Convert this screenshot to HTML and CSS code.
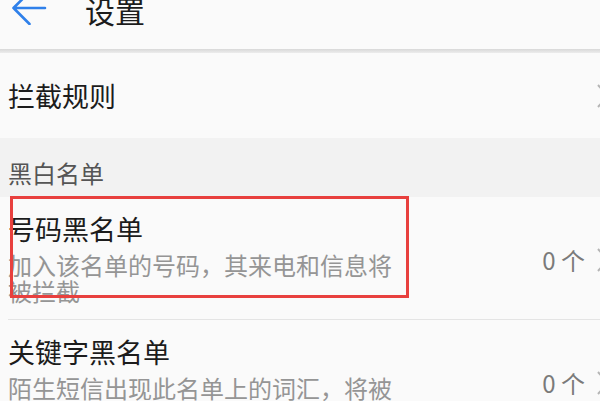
FILE: index.html
```html
<!DOCTYPE html>
<html lang="zh-CN">
<head>
<meta charset="utf-8">
<title>设置</title>
<link rel="stylesheet" href="styles.css">
</head>
<body>
<div class="screen">
  <header class="topbar">
    <svg class="back" viewBox="0 0 36 34" width="36" height="34">
      <path d="M34 17H2.5M18.5 1L2.5 17L18.5 33" fill="none" stroke="#2f80ea" stroke-width="2.6" stroke-linecap="round" stroke-linejoin="round"/>
    </svg>
    <h1 class="title">设置</h1>
  </header>
  <div class="topbar-shadow"></div>

  <div class="row row-single">
    <span class="row-title">拦截规则</span>
    <svg class="chevron" viewBox="0 0 12 24" width="12" height="24">
      <path d="M1 1L11 12L1 23" fill="none" stroke="#b5b5b5" stroke-width="2"/>
    </svg>
  </div>

  <div class="section">黑白名单</div>

  <div class="row row-item">
    <div class="row-text">
      <div class="row-title">号码黑名单</div>
      <div class="row-sub">加入该名单的号码，其来电和信息将被拦截</div>
    </div>
    <span class="count">0 个</span>
    <svg class="chevron" viewBox="0 0 12 24" width="12" height="24">
      <path d="M1 1L11 12L1 23" fill="none" stroke="#b5b5b5" stroke-width="2"/>
    </svg>
  </div>
  <div class="divider"></div>
  <div class="row row-item">
    <div class="row-text">
      <div class="row-title">关键字黑名单</div>
      <div class="row-sub">陌生短信出现此名单上的词汇，将被拦截</div>
    </div>
    <span class="count">0 个</span>
    <svg class="chevron" viewBox="0 0 12 24" width="12" height="24">
      <path d="M1 1L11 12L1 23" fill="none" stroke="#b5b5b5" stroke-width="2"/>
    </svg>
  </div>

  <div class="annotation"></div>
</div>
</body>
</html>
```

FILE: styles.css
```css
html, body {
  margin: 0;
  padding: 0;
  background: #fafafa;
}

.screen {
  position: relative;
  width: 600px;
  height: 401px;
  overflow: hidden;
  background: #fafafa;
  font-family: "Noto Sans CJK SC", "Noto Sans", sans-serif;
  color: #1c1c1c;
}

.topbar {
  display: flex;
  align-items: flex-start;
  height: 49px;
  background: #fafafa;
}

.back {
  display: block;
  flex: none;
  margin: -9px 0 0 11px;
}

.title {
  margin: -5px 0 0 38px;
  font-size: 30px;
  line-height: 30px;
  font-weight: 400;
  color: #1c1c1c;
}

.topbar-shadow {
  height: 4px;
  background: linear-gradient(#d8d8d8, #ececec);
}

.row {
  display: flex;
  align-items: center;
  padding-left: 8px;
  background: #fafafa;
}

.row-single {
  height: 85px;
}

.row-title {
  font-size: 27px;
  line-height: 27px;
  color: #1c1c1c;
}

.row-single .row-title {
  flex: 1;
}

.chevron {
  display: block;
  flex: none;
  margin-right: -9px;
}

.section {
  height: 59px;
  box-sizing: border-box;
  padding: 23px 0 0 8px;
  background: #f2f2f2;
  font-size: 24px;
  line-height: 24px;
  color: #555555;
}

.row-item {
  padding-top: 18px;
  padding-bottom: 15px;
}

.row-text {
  flex: 1;
}

.row-sub {
  width: 390px;
  margin-top: 10px;
  font-size: 24px;
  line-height: 26px;
  color: #959595;
}

.count {
  flex: none;
  margin-right: 12px;
  font-size: 24px;
  line-height: 24px;
  color: #7a7a7a;
}

.divider {
  height: 1px;
  margin-left: 8px;
  background: #e4e4e4;
}

.annotation {
  position: absolute;
  left: 10px;
  top: 196px;
  width: 399px;
  height: 102px;
  box-sizing: border-box;
  border: 3px solid #e8403e;
}
```
